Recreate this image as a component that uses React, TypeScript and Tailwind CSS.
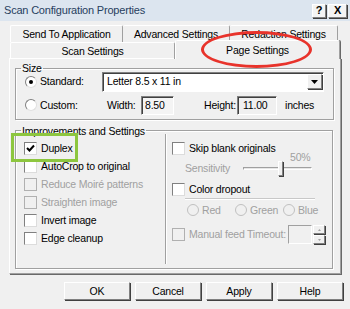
import React from 'react';

const raised = 'border border-t-white border-l-white border-r-[#808080] border-b-[#808080] shadow-[1px_1px_0_#404040]';
const sunken = 'border border-t-[#808080] border-l-[#808080] border-r-white border-b-white shadow-[inset_1px_1px_0_#404040]';
const etched = 'border border-[#a0a0a0] shadow-[inset_1px_1px_0_#fff,1px_1px_0_#fff]';

function CheckBox({ label, checked, disabled }: { label: string; checked?: boolean; disabled?: boolean }) {
  return (
    <div className="flex items-center h-[18px]">
      <div className={`w-[13px] h-[13px] border flex items-center justify-center ${disabled ? 'border-[#b0b0b0] bg-[#f0f0f0]' : 'border-t-[#808080] border-l-[#808080] border-r-[#dcdcdc] border-b-[#dcdcdc] bg-white'}`}>
        {checked && (
          <svg width="9" height="9" viewBox="0 0 9 9">
            <path d="M1 4 L3.5 6.5 L8 1.5" stroke="#000" strokeWidth="2" fill="none" />
          </svg>
        )}
      </div>
      <span className={`ml-[4px] ${disabled ? 'text-[#a0a0a0]' : 'text-black'}`}>{label}</span>
    </div>
  );
}

function Radio({ label, checked, disabled }: { label: string; checked?: boolean; disabled?: boolean }) {
  return (
    <div className="flex items-center">
      <div className={`w-[12px] h-[12px] rounded-full border flex items-center justify-center ${disabled ? 'border-[#c0c0c0] bg-[#f0f0f0]' : 'border-t-[#808080] border-l-[#808080] border-r-[#e0e0e0] border-b-[#e0e0e0] bg-white'}`}>
        {checked && <div className="w-[4px] h-[4px] rounded-full bg-black" />}
      </div>
      <span className={`ml-[3px] ${disabled ? 'text-[#a0a0a0]' : 'text-black'}`}>{label}</span>
    </div>
  );
}

function Button({ label }: { label: string }) {
  return (
    <div className={`w-[66px] h-[18px] flex items-center justify-center bg-[#f0f0f0] ${raised}`}>{label}</div>
  );
}

export default function App() {
  return (
    <div className="relative w-[350px] h-[309px] bg-[#f0f0f0] overflow-hidden text-[10.5px] tracking-[-0.2px] leading-none text-black font-['Liberation_Sans',Tahoma,sans-serif]">
      {/* title bar */}
      <div className="h-[21px] bg-[#dce5ef] flex items-center pl-[4px] pr-[3px]">
        <span className="text-[#27405e] text-[11px]">Scan Configuration Properties</span>
        <div className="ml-auto flex gap-[2px]">
          <div className={`w-[14px] h-[14px] flex items-center justify-center bg-[#f4f4f4] font-bold text-[11px] ${raised}`}>?</div>
          <div className={`w-[19px] h-[14px] flex items-center justify-center bg-[#f4f4f4] font-bold text-[11px] ${raised}`}>X</div>
        </div>
      </div>

      {/* tabs */}
      <div className="mt-[4px] ml-[10px]">
        <div className="flex h-[17px]">
          <div className="w-[113px] flex items-center justify-center border-t border-l border-t-white border-l-white border-r border-r-[#a0a0a0] rounded-t-[2px]">Send To Application</div>
          <div className="w-[107px] flex items-center justify-center border-t border-t-white border-r border-r-[#a0a0a0] rounded-t-[2px]">Advanced Settings</div>
          <div className="w-[108px] flex items-center justify-center border-t border-t-white border-r border-r-[#a0a0a0] rounded-t-[2px]">Redaction Settings</div>
        </div>
        <div className="flex h-[17px] w-[330px]">
          <div className="w-[165px] flex items-center justify-center border-t border-l border-t-white border-l-white border-r border-r-[#a0a0a0] rounded-t-[2px]">Scan Settings</div>
          <div className="relative z-10 w-[165px] h-[19px] -mt-[2px] flex items-center justify-center bg-[#f0f0f0] border-t border-l border-t-white border-l-white border-r border-r-[#a0a0a0] shadow-[1px_0_0_#696969] rounded-t-[2px]">Page Settings</div>
        </div>
      </div>

      {/* panel */}
      <div className="ml-[9px] w-[332px] h-[216px] -mt-px border border-t-white border-l-white border-r-[#a0a0a0] border-b-[#a0a0a0] shadow-[1px_1px_0_#696969] px-[5px] pt-[4px]">
        <fieldset className={`${etched} w-[318px] px-[9px]`}>
          <legend className="px-[1px] -ml-[4px]">Size</legend>
          <div className="h-[47px] -mt-[2px]">
            <div className="flex items-center h-[20px]">
              <div className="w-[77px]"><Radio label="Standard:" checked /></div>
              <div className={`w-[222px] h-[20px] bg-white flex items-center pl-[4px] ${sunken}`}>
                <span>Letter 8.5 x 11 in</span>
                <div className={`ml-auto mr-[1px] w-[15px] h-[15px] flex items-center justify-center bg-[#f0f0f0] ${raised}`}>
                  <svg width="7" height="4" viewBox="0 0 7 4"><path d="M0 0 H7 L3.5 4 Z" fill="#000" /></svg>
                </div>
              </div>
            </div>
            <div className="flex items-center h-[19px] mt-[4px]">
              <div className="w-[82px]"><Radio label="Custom:" /></div>
              <span className="w-[34px]">Width:</span>
              <div className={`w-[33px] h-[19px] bg-[#f4f4f4] flex items-center pl-[3px] ${sunken}`}>8.50</div>
              <span className="ml-[30px] w-[33px]">Height:</span>
              <div className={`w-[40px] h-[19px] bg-[#f0f0f0] flex items-center pl-[5px] ${sunken}`}>11.00</div>
              <span className="ml-[8px]">inches</span>
            </div>
          </div>
        </fieldset>

        <fieldset className={`mt-[6px] ${etched} w-[318px] pl-[8px]`}>
          <legend className="px-[1px] -ml-[3px]">Improvements and Settings</legend>
          <div className="flex h-[132px]">
            <div className="w-[141px] pt-[3px] flex flex-col">
              <CheckBox label="Duplex" checked />
              <CheckBox label="AutoCrop to original" />
              <CheckBox label="Reduce Moiré patterns" disabled />
              <CheckBox label="Straighten image" disabled />
              <CheckBox label="Invert image" />
              <CheckBox label="Edge cleanup" />
            </div>
            <div className="w-[2px] h-[130px] -mt-[2px] border-l border-l-[#a0a0a0] border-r border-r-white" />
            <div className="ml-[5px] flex-1 pt-[3px] flex flex-col">
              <CheckBox label="Skip blank originals" />
              <div className="relative h-[22px] flex items-center pl-[13px] text-[#a0a0a0]">
                <span className="w-[58px]">Sensitivity</span>
                <span className="absolute left-[118px] -top-[5px]">50%</span>
                <div className="relative w-[69px] h-[3px] border border-t-[#a0a0a0] border-l-[#a0a0a0] border-b-white border-r-white bg-[#e6e6e6]">
                  <div className={`absolute left-[34px] -top-[7px] w-[5px] h-[15px] bg-[#f0f0f0] ${raised}`} />
                </div>
              </div>
              <div className="mt-[1px]">
                <CheckBox label="Color dropout" />
              </div>
              <div className="ml-[13px] w-[130px] h-[2px] border-t border-t-[#c8c8c8] border-b border-b-white" />
              <div className="flex items-center h-[20px] ml-[15px]">
                <div className="w-[48px]"><Radio label="Red" disabled /></div>
                <div className="w-[48px]"><Radio label="Green" disabled /></div>
                <div className="w-[48px]"><Radio label="Blue" disabled /></div>
              </div>
              <div className="flex items-center mt-[5px] h-[19px]">
                <div className="w-[75px]"><CheckBox label="Manual feed" disabled /></div>
                <span className="w-[41px] text-[#a0a0a0]">Timeout:</span>
                <div className="w-[24px] h-[19px] border border-t-[#a0a0a0] border-l-[#a0a0a0] border-r-white border-b-white bg-[#f0f0f0]" />
                <div className="ml-[1px] flex flex-col h-[19px]">
                  <div className={`w-[12px] h-[9px] bg-[#f0f0f0] ${raised} flex items-center justify-center`}>
                    <svg width="3" height="2" viewBox="0 0 3 2"><path d="M0 2 H3 L1.5 0 Z" fill="#a0a0a0" /></svg>
                  </div>
                  <div className={`w-[12px] h-[9px] mt-px bg-[#f0f0f0] ${raised} flex items-center justify-center`}>
                    <svg width="3" height="2" viewBox="0 0 3 2"><path d="M0 0 H3 L1.5 2 Z" fill="#a0a0a0" /></svg>
                  </div>
                </div>
              </div>
            </div>
          </div>
        </fieldset>
      </div>

      {/* buttons */}
      <div className="flex mt-[8px] ml-[64px] gap-[5px]">
        <Button label="OK" />
        <Button label="Cancel" />
        <Button label="Apply" />
        <Button label="Help" />
      </div>

      {/* annotations */}
      <div className="absolute z-20 left-[201px] top-[31px] w-[111px] h-[37px] rounded-[50%] border-[3px] border-[#e8332b]" />
      <div className="absolute z-20 left-[11px] top-[133px] w-[67px] h-[29px] border-[3px] border-[#8dc63f]" />
    </div>
  );
}
